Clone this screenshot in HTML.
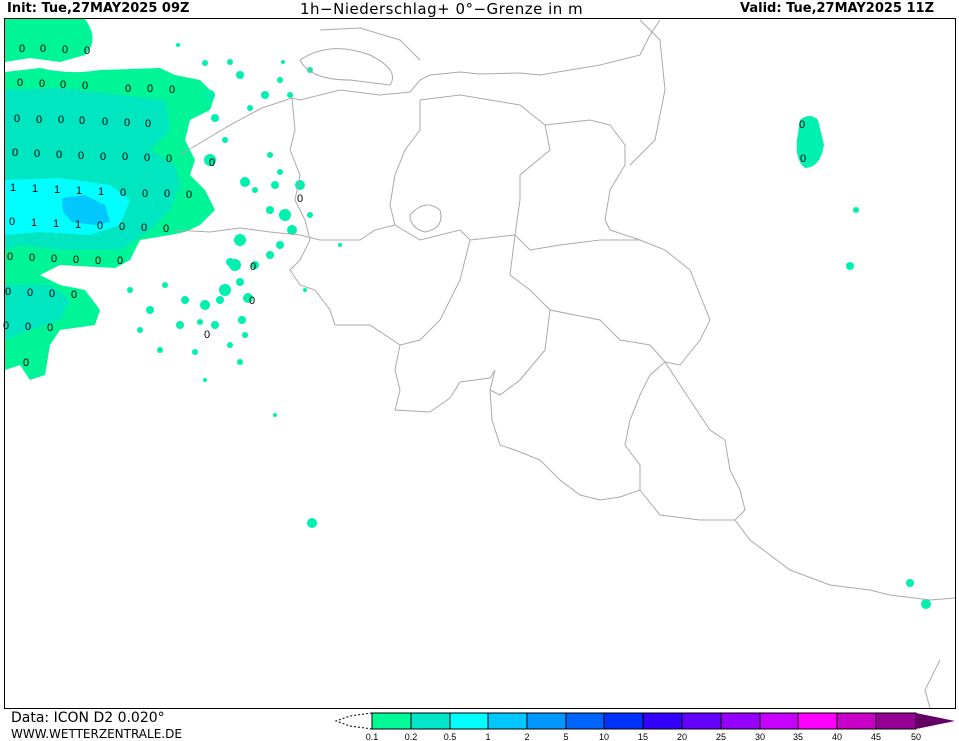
<!DOCTYPE html>
<html><head><meta charset="utf-8"><style>
body{margin:0;background:#fff;width:959px;height:741px;overflow:hidden;font-family:"DejaVu Sans","Liberation Sans",sans-serif}
.t{position:absolute;font-size:14px;color:#000;white-space:nowrap}
</style></head><body>
<div class="t" style="left:7px;top:1px;font-weight:bold;font-size:13px">Init: Tue,27MAY2025 09Z</div>
<div class="t" style="left:300px;top:0px;font-size:15px;letter-spacing:0.5px">1h−Niederschlag+ 0°−Grenze in m</div>
<div class="t" style="left:740px;top:1px;font-weight:bold;font-size:13px">Valid: Tue,27MAY2025 11Z</div>
<div class="t" style="left:11px;top:710px;font-size:14px">Data: ICON D2 0.020°</div>
<div class="t" style="left:11px;top:727px;font-size:12px">WWW.WETTERZENTRALE.DE</div>
<svg width="959" height="741" style="position:absolute;left:0;top:0">
<g fill="#00f596">
<path d="M5 19 L85 19 Q100 40 85 55 L60 62 L30 58 L5 62Z"/>
<path d="M5 72 L40 68 Q70 75 100 70 L160 68 L175 75 L200 80 L215 95 L210 110 L190 120 L185 140 L195 160 L190 175 L205 190 L215 210 L200 225 L185 232 L170 235 L140 240 L130 260 L115 268 L60 265 L40 275 L60 285 L85 290 L100 310 L95 325 L60 330 L50 345 L45 375 L30 380 L20 365 L5 370Z"/>
<path d="M5 270 L30 268 L35 290 L20 300 L5 300Z"/>
</g>
<g fill="#00e6c0">
<path d="M5 90 L60 88 L120 95 L165 100 L170 130 L150 150 L175 165 L180 185 L170 210 L150 230 L120 250 L60 250 L20 245 L5 250Z"/>
<path d="M5 285 L50 285 L70 300 L60 320 L30 330 L5 340Z"/>
</g>
<path d="M5 180 L60 178 L110 185 L130 200 L120 225 L90 235 L40 232 L5 235Z" fill="#00ffff"/>
<path d="M62 198 L85 195 L105 205 L110 222 L95 225 L72 222 L63 212Z" fill="#00c8ff"/>
<g fill="#00f0b0">
<circle cx="210" cy="160" r="6"/><circle cx="240" cy="75" r="4"/><circle cx="245" cy="182" r="5"/><circle cx="275" cy="185" r="4"/><circle cx="300" cy="185" r="5"/><circle cx="285" cy="215" r="6"/><circle cx="292" cy="230" r="5"/><circle cx="240" cy="240" r="6"/><circle cx="235" cy="265" r="6"/><circle cx="225" cy="290" r="6"/><circle cx="248" cy="298" r="5"/><circle cx="205" cy="305" r="5"/><circle cx="215" cy="325" r="4"/><circle cx="185" cy="300" r="4"/><circle cx="180" cy="325" r="4"/><circle cx="255" cy="265" r="4"/><circle cx="270" cy="255" r="4"/><circle cx="265" cy="95" r="4"/><circle cx="280" cy="80" r="3"/><circle cx="312" cy="523" r="5"/><circle cx="910" cy="583" r="4"/><circle cx="926" cy="604" r="5"/><circle cx="850" cy="266" r="4"/><circle cx="856" cy="210" r="3"/><circle cx="242" cy="320" r="4"/><circle cx="230" cy="345" r="3"/>
<circle cx="178" cy="45" r="2"/><circle cx="205" cy="63" r="3"/><circle cx="230" cy="62" r="3"/><circle cx="283" cy="62" r="2"/><circle cx="310" cy="70" r="3"/><circle cx="215" cy="118" r="4"/><circle cx="210" cy="95" r="5"/><circle cx="250" cy="108" r="3"/><circle cx="290" cy="95" r="3"/><circle cx="270" cy="155" r="3"/><circle cx="280" cy="172" r="3"/><circle cx="255" cy="190" r="3"/><circle cx="270" cy="210" r="4"/><circle cx="310" cy="215" r="3"/><circle cx="280" cy="245" r="4"/><circle cx="230" cy="262" r="4"/><circle cx="240" cy="282" r="4"/><circle cx="220" cy="300" r="4"/><circle cx="200" cy="322" r="3"/><circle cx="245" cy="335" r="3"/><circle cx="195" cy="352" r="3"/><circle cx="205" cy="380" r="2"/><circle cx="240" cy="362" r="3"/><circle cx="160" cy="350" r="3"/><circle cx="140" cy="330" r="3"/><circle cx="150" cy="310" r="4"/><circle cx="130" cy="290" r="3"/><circle cx="165" cy="285" r="3"/><circle cx="340" cy="245" r="2"/><circle cx="275" cy="415" r="2"/><circle cx="305" cy="290" r="2"/><circle cx="225" cy="140" r="3"/>
<path d="M800 120 Q810 112 818 120 L824 145 Q820 168 805 168 Q795 160 797 140Z"/>
</g>
<g fill="none" stroke="#aaa" stroke-width="1">
<path d="M180 155 L230 125 L262 108 L292 98 L300 100 L340 90 L380 95 L410 92 L420 80 L430 75 L460 72 L480 74 L520 73 L540 75 L570 70 L600 65 L640 55 L650 35 L660 20"/>
<path d="M292 98 L295 130 L290 150 L300 175 L295 200 L305 220 L310 240 L300 260 L290 270 L300 285 L315 290 L330 310 L335 325 L370 325 L385 335 L400 345 L395 370 L400 390 L395 410 L430 412 L450 398 L460 382 L490 378 L495 370 L490 390 L492 420 L500 445 L515 450 L540 460 L560 480 L580 495 L600 500 L620 497 L640 490 L640 465 L625 445 L630 420 L640 395 L650 375 L665 362 L680 365 L700 340 L710 320 L700 295 L690 270 L665 250 L640 240 L610 230 L605 220 L610 190 L625 165 L625 145 L610 125 L590 120 L545 125"/>
<path d="M665 362 L690 400 L710 430 L725 440 L730 470 L740 490 L745 510 L735 520 L750 540 L770 555 L790 570 L830 585 L870 590 L890 595 L930 600 L955 598"/>
<path d="M640 490 L660 515 L700 520 L720 520 L735 520"/>
<path d="M420 100 L420 130 L405 150 L395 175 L390 205 L395 225 L375 230 L360 240 L320 240 L300 235"/>
<path d="M420 100 L460 95 L520 105 L545 125 L550 150 L520 175 L520 200 L515 235 L470 240 L460 230 L420 240 L395 225"/>
<path d="M515 235 L530 250 L560 245 L600 240 L640 240"/>
<path d="M470 240 L460 280 L450 300 L440 320 L420 340 L400 345"/>
<path d="M515 235 L510 275 L530 290 L550 310 L575 315 L600 320 L620 340 L650 345 L665 362"/>
<path d="M550 310 L545 350 L520 380 L500 395 L490 390"/>
<path d="M410 215 Q425 198 440 210 Q445 228 425 232 Q410 228 410 215Z"/>
<path d="M640 20 L660 40 L665 90 L655 140 L630 165"/>
<path d="M300 60 Q330 40 370 55 Q400 70 390 85 L350 80 Q310 80 300 60Z"/>
<path d="M320 30 L360 28 L400 40 L420 60"/>
<path d="M940 660 L925 690 L930 708"/>
<path d="M175 230 L210 232 L240 228 L270 232 L300 235"/>
</g>
<g font-family="Liberation Sans,sans-serif" font-size="11" fill="#000" text-anchor="middle">
<text x="22" y="52">0</text><text x="43" y="52">0</text><text x="65" y="53">0</text><text x="87" y="54">0</text>
<text x="20" y="86">0</text><text x="42" y="87">0</text><text x="63" y="88">0</text><text x="85" y="89">0</text><text x="128" y="92">0</text><text x="150" y="92">0</text><text x="172" y="93">0</text>
<text x="17" y="122">0</text><text x="39" y="123">0</text><text x="61" y="123">0</text><text x="82" y="124">0</text><text x="105" y="125">0</text><text x="127" y="126">0</text><text x="148" y="127">0</text>
<text x="15" y="156">0</text><text x="37" y="157">0</text><text x="59" y="158">0</text><text x="81" y="159">0</text><text x="103" y="160">0</text><text x="125" y="160">0</text><text x="147" y="161">0</text><text x="169" y="162">0</text>
<text x="13" y="191">1</text><text x="35" y="192">1</text><text x="57" y="193">1</text><text x="79" y="194">1</text><text x="101" y="195">1</text><text x="123" y="196">0</text><text x="145" y="197">0</text><text x="167" y="197">0</text><text x="189" y="198">0</text>
<text x="12" y="225">0</text><text x="34" y="226">1</text><text x="56" y="227">1</text><text x="78" y="228">1</text><text x="100" y="229">0</text><text x="122" y="230">0</text><text x="144" y="231">0</text><text x="166" y="232">0</text>
<text x="10" y="260">0</text><text x="32" y="261">0</text><text x="54" y="262">0</text><text x="76" y="263">0</text><text x="98" y="264">0</text><text x="120" y="264">0</text>
<text x="8" y="295">0</text><text x="30" y="296">0</text><text x="52" y="297">0</text><text x="74" y="298">0</text>
<text x="6" y="329">0</text><text x="28" y="330">0</text><text x="50" y="331">0</text>
<text x="26" y="366">0</text><text x="212" y="166">0</text><text x="300" y="202">0</text><text x="253" y="270">0</text><text x="252" y="304">0</text><text x="207" y="338">0</text><text x="802" y="128">0</text><text x="803" y="162">0</text>
</g>
<rect x="4.5" y="18.5" width="951" height="690" fill="none" stroke="#000"/>
<g stroke="#000" stroke-width="1">
<rect x="372" y="713" width="39" height="16" fill="#00fa96"/>
<rect x="411" y="713" width="39" height="16" fill="#00e6c8"/>
<rect x="450" y="713" width="38" height="16" fill="#00ffff"/>
<rect x="488" y="713" width="39" height="16" fill="#00c8ff"/>
<rect x="527" y="713" width="39" height="16" fill="#0096ff"/>
<rect x="566" y="713" width="38" height="16" fill="#0064ff"/>
<rect x="604" y="713" width="39" height="16" fill="#0032ff"/>
<rect x="643" y="713" width="39" height="16" fill="#3200ff"/>
<rect x="682" y="713" width="39" height="16" fill="#6400ff"/>
<rect x="721" y="713" width="39" height="16" fill="#9600ff"/>
<rect x="760" y="713" width="38" height="16" fill="#c800ff"/>
<rect x="798" y="713" width="39" height="16" fill="#ff00ff"/>
<rect x="837" y="713" width="39" height="16" fill="#c800c8"/>
<rect x="876" y="713" width="40" height="16" fill="#960096"/>
</g>
<path d="M916 713 L955 721 L916 729Z" fill="#640064"/>
<path d="M372 713 L350 716 L336 721 L350 726 L372 729" fill="none" stroke="#000" stroke-dasharray="2,2"/>
<g font-family="Liberation Sans,sans-serif" font-size="9" fill="#000" text-anchor="middle">
<text x="372" y="740">0.1</text><text x="411" y="740">0.2</text><text x="450" y="740">0.5</text><text x="488" y="740">1</text><text x="527" y="740">2</text><text x="566" y="740">5</text><text x="604" y="740">10</text><text x="643" y="740">15</text><text x="682" y="740">20</text><text x="721" y="740">25</text><text x="760" y="740">30</text><text x="798" y="740">35</text><text x="837" y="740">40</text><text x="876" y="740">45</text><text x="916" y="740">50</text>
</g>
</svg>
</body></html>
